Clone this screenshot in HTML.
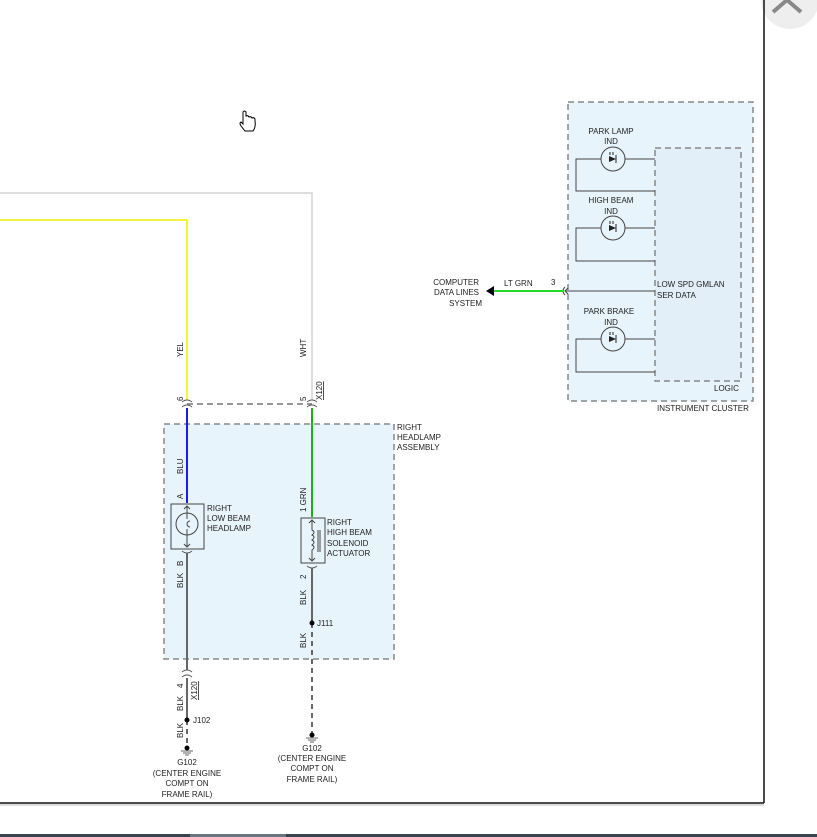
<!DOCTYPE html>
<html><head><meta charset="utf-8"><style>
html,body{margin:0;padding:0;background:#fff;width:817px;height:837px;overflow:hidden}
svg{display:block}
text{font-family:"Liberation Sans",sans-serif;font-size:8px;fill:#222}
</style></head><body>
<svg width="817" height="837" viewBox="0 0 817 837" xmlns="http://www.w3.org/2000/svg">
<circle cx="790" cy="0" r="29" fill="#eeeeee"/>
<path d="M773 12 L787 0 L801 12" stroke="#888" stroke-width="4" fill="none"/>
<line x1="764" y1="0" x2="764" y2="803" stroke="#111" stroke-width="1.5"/>
<line x1="0" y1="803" x2="764" y2="803" stroke="#111" stroke-width="1.5"/>
<line x1="0" y1="805" x2="764" y2="805" stroke="#bbb" stroke-width="1"/>
<rect x="0" y="834" width="817" height="3" fill="#3a4350"/>
<rect x="190" y="834" width="96" height="3" fill="#6a7480"/>
<rect x="164" y="424" width="230" height="235" fill="#e8f4fc" stroke="#888" stroke-width="1.5" stroke-dasharray="6,4"/>
<rect x="568" y="102" width="185" height="299" fill="#e8f4fc" stroke="#888" stroke-width="1.5" stroke-dasharray="6,4"/>
<rect x="655" y="148" width="86" height="233" fill="#e2eff8" stroke="#888" stroke-width="1.5" stroke-dasharray="6,4"/>
<polyline points="0,193 312,193 312,400" fill="none" stroke="#d4d4d4" stroke-width="1.5"/>
<polyline points="0,220 187,220 187,400" fill="none" stroke="#f0f000" stroke-width="1.5"/>
<line x1="187" y1="404" x2="312" y2="404" stroke="#777" stroke-width="1.5" stroke-dasharray="6,4"/>
<g fill="none" stroke="#555" stroke-width="1">
<path d="M182 402 Q187 398 192 402 M182 407 Q187 403 192 407"/>
<path d="M307 402 Q312 398 317 402 M307 407 Q312 403 317 407"/>
<path d="M182 672 Q187 668 192 672 M182 677 Q187 673 192 677"/>
<path d="M182 551 Q187 555 192 551"/>
<path d="M307 566 Q312 570 317 566"/>
</g>
<line x1="187" y1="408" x2="187" y2="503" stroke="#1a1aee" stroke-width="2"/>
<line x1="312" y1="408" x2="312" y2="517" stroke="#22aa22" stroke-width="2"/>
<line x1="187" y1="553" x2="187" y2="670" stroke="#666" stroke-width="2"/>
<line x1="187" y1="678" x2="187" y2="720" stroke="#666" stroke-width="2"/>
<line x1="187" y1="720" x2="187" y2="745" stroke="#666" stroke-width="2" stroke-dasharray="5,4"/>
<line x1="312" y1="568" x2="312" y2="623" stroke="#666" stroke-width="2"/>
<line x1="312" y1="623" x2="312" y2="733" stroke="#666" stroke-width="2" stroke-dasharray="5,4"/>
<rect x="171" y="504" width="33" height="45" fill="none" stroke="#444" stroke-width="1"/>
<circle cx="187" cy="524" r="11" fill="none" stroke="#444"/>
<path d="M187 506 V519 M187 529 V547 M184 509 L187 506 L190 509 M184 544 L187 547 L190 544" stroke="#444" fill="none"/>
<path d="M190 521 A3 3 0 1 0 190 527" stroke="#444" fill="none"/>
<rect x="301" y="518" width="24" height="45" fill="none" stroke="#444"/>
<path d="M312 520 V530 Q316 532 312 535 Q316 537 312 540 Q316 542 312 545 Q316 547 312 550 V561 M309 523 L312 520 L315 523 M309 558 L312 561 L315 558 M318 530 V552 M320 530 V552" stroke="#444" fill="none"/>
<circle cx="312" cy="623" r="2.5" fill="#000"/>
<circle cx="187" cy="720" r="2.5" fill="#000"/>
<circle cx="187" cy="748" r="2.5" fill="#000"/>
<circle cx="312" cy="735" r="2.5" fill="#000"/>
<path d="M181 751 H193 M183 753 H191 M185 755 H189 M306 738 H318 M308 740 H316 M310 742 H314" stroke="#666"/>
<g font-size="7.5">
<text transform="translate(183,357) rotate(-90)">YEL</text>
<text transform="translate(306,357) rotate(-90)">WHT</text>
<text transform="translate(183,401) rotate(-90)">6</text>
<text transform="translate(306,401) rotate(-90)">5</text>
<text transform="translate(322,400) rotate(-90)" text-decoration="underline">X120</text>
<text transform="translate(183,474) rotate(-90)">BLU</text>
<text transform="translate(183,499) rotate(-90)">A</text>
<text transform="translate(183,566) rotate(-90)">B</text>
<text transform="translate(183,588) rotate(-90)">BLK</text>
<text transform="translate(306,512) rotate(-90)">1 GRN</text>
<text transform="translate(306,579) rotate(-90)">2</text>
<text transform="translate(306,605) rotate(-90)">BLK</text>
<text transform="translate(306,648) rotate(-90)">BLK</text>
<text transform="translate(183,688) rotate(-90)">4</text>
<text transform="translate(197,700) rotate(-90)" text-decoration="underline">X120</text>
<text transform="translate(183,711) rotate(-90)">BLK</text>
<text transform="translate(183,738) rotate(-90)">BLK</text>
</g>
<text x="207" y="511">RIGHT</text><text x="207" y="521">LOW BEAM</text><text x="207" y="531">HEADLAMP</text>
<text x="327" y="525">RIGHT</text><text x="327" y="535">HIGH BEAM</text><text x="327" y="546">SOLENOID</text><text x="327" y="556">ACTUATOR</text>
<text x="397" y="430">RIGHT</text><text x="397" y="440">HEADLAMP</text><text x="397" y="450">ASSEMBLY</text>
<text x="317" y="626">J111</text><text x="193" y="723">J102</text>
<g text-anchor="middle">
<text x="187" y="765">G102</text><text x="187" y="776">(CENTER ENGINE</text><text x="187" y="786">COMPT ON</text><text x="187" y="797">FRAME RAIL)</text>
<text x="312" y="751">G102</text><text x="312" y="761">(CENTER ENGINE</text><text x="312" y="771">COMPT ON</text><text x="312" y="782">FRAME RAIL)</text>
</g>
<g fill="none" stroke="#444" stroke-width="1">
<polyline points="625,159 655,159"/><polyline points="601,159 576,159 576,191 655,191"/>
<polyline points="625,228 655,228"/><polyline points="601,228 576,228 576,261 655,261"/>
<polyline points="625,339 655,339"/><polyline points="601,339 576,339 576,372 655,372"/>
<circle cx="613" cy="159" r="12"/><circle cx="613" cy="228" r="12"/><circle cx="613" cy="339" r="12"/>
<line x1="566" y1="291" x2="655" y2="291"/>
<path d="M568 288 L565 291 L568 294 M565 287 Q561 291 565 295"/>
</g>
<path d="M609 156 L616 159 L609 162Z M609 225 L616 228 L609 231Z M609 336 L616 339 L609 342Z" fill="#222"/>
<path d="M616 155 V163 M616 224 V232 M616 335 V343 M610 152 V155 M613 152 V155 M610 221 V224 M613 221 V224 M610 332 V335 M613 332 V335" stroke="#222"/>
<line x1="494" y1="291" x2="564" y2="291" stroke="#22dd22" stroke-width="2"/>
<path d="M486 291 L494 286 L494 296Z" fill="#000"/>
<g text-anchor="middle">
<text x="611" y="134">PARK LAMP</text><text x="611" y="144" fill="#7a1010">IND</text>
<text x="611" y="203">HIGH BEAM</text><text x="611" y="214" fill="#7a1010">IND</text>
<text x="609" y="314">PARK BRAKE</text><text x="611" y="325" fill="#7a1010">IND</text>
</g>
<text x="504" y="286">LT GRN</text><text x="551" y="285">3</text>
<g text-anchor="end"><text x="479" y="285">COMPUTER</text><text x="479" y="295">DATA LINES</text><text x="482" y="306">SYSTEM</text></g>
<text x="657" y="287">LOW SPD GMLAN</text><text x="657" y="298">SER DATA</text>
<text x="714" y="391">LOGIC</text><text x="657" y="411">INSTRUMENT CLUSTER</text>
<path d="M243 112 V124 L241 122 Q239 123 241 126 L245 131 H253 Q256 127 255 121 V119 Q254 117 252 118 Q251 116 249 117 Q248 115 246 116 V112 Q244 110 243 112Z" fill="#fff" stroke="#000" stroke-width="1"/>
</svg>
</body></html>
